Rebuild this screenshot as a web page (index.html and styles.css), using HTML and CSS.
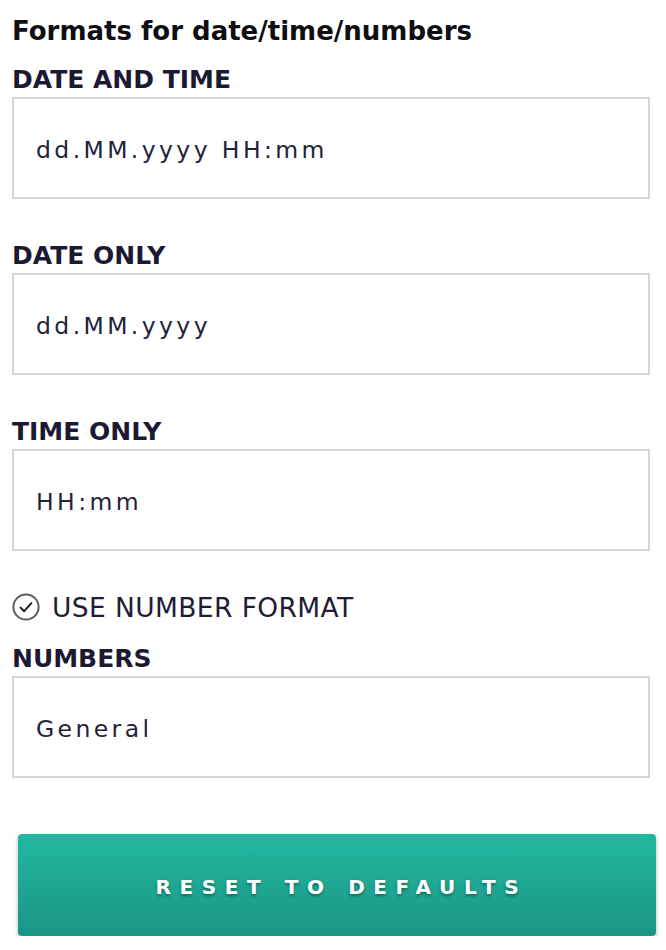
FILE: index.html
```html
<!DOCTYPE html>
<html lang="en">
<head>
<meta charset="utf-8">
<title>Formats</title>
<link rel="stylesheet" href="styles.css">
</head>
<body>
<div class="panel">
  <h1 class="title">Formats for date/time/numbers</h1>
  <div class="field">
    <label class="label">DATE AND TIME</label>
    <input class="input" type="text" value="dd.MM.yyyy HH:mm">
  </div>
  <div class="field">
    <label class="label">DATE ONLY</label>
    <input class="input" type="text" value="dd.MM.yyyy">
  </div>
  <div class="field">
    <label class="label">TIME ONLY</label>
    <input class="input" type="text" value="HH:mm">
  </div>
  <div class="check-row">
    <svg class="check-icon" width="28" height="28" viewBox="0 0 28 28">
      <circle cx="14" cy="14" r="12.6" fill="none" stroke="#5a5f63" stroke-width="2"/>
      <path d="M8.6 14.6 L12.2 18.2 L19.4 10.2" fill="none" stroke="#1b1a2c" stroke-width="2" stroke-linecap="round" stroke-linejoin="round"/>
    </svg>
    <span class="check-text">USE NUMBER FORMAT</span>
  </div>
  <div class="field">
    <label class="label">NUMBERS</label>
    <input class="input" type="text" value="General">
  </div>
  <button class="reset-btn" type="button">RESET TO DEFAULTS</button>
</div>
</body>
</html>
```
FILE: styles.css
```css
html, body {
  margin: 0;
  padding: 0;
  background: #ffffff;
}

.panel {
  display: flex;
  flex-direction: column;
  padding: 16px 16px 0 12px;
  font-family: "DejaVu Sans", sans-serif;
}

.title {
  margin: 0 0 20px 0;
  font-size: 26px;
  line-height: 30px;
  font-weight: bold;
  color: #0f0f12;
}

.field {
  display: flex;
  flex-direction: column;
  margin-bottom: 43px;
}

.label {
  font-size: 25px;
  line-height: 28px;
  font-weight: bold;
  color: #1c1a33;
  margin-bottom: 3px;
}

.input {
  box-sizing: border-box;
  width: 638px;
  height: 102px;
  border: 2px solid #d6d6d6;
  border-radius: 0;
  padding: 4px 22px 0 22px;
  font-family: "DejaVu Sans", sans-serif;
  font-size: 23.5px;
  letter-spacing: 3.4px;
  color: #24223a;
  background: #ffffff;
  outline: none;
}

.check-row {
  display: flex;
  align-items: center;
  gap: 12px;
  height: 30px;
  margin-top: -2px;
  margin-bottom: 23px;
}

.check-icon {
  flex: none;
}

.check-text {
  font-size: 26.5px;
  letter-spacing: 0.4px;
  color: #1f1d36;
}

.field:last-of-type {
  margin-bottom: 56px;
}

.reset-btn {
  box-sizing: border-box;
  width: 638px;
  height: 102px;
  margin-left: 6px;
  border: none;
  border-radius: 4px;
  background: linear-gradient(to bottom, #22b8a0, #1b9585);
  box-shadow: 0 2px 4px rgba(0, 0, 0, 0.3);
  color: #ffffff;
  font-family: "DejaVu Sans", sans-serif;
  font-size: 20px;
  font-weight: bold;
  letter-spacing: 8.6px;
  padding: 4px 0 0 8.6px;
  text-shadow: 0 2px 3px rgba(0, 0, 0, 0.35);
}
```
